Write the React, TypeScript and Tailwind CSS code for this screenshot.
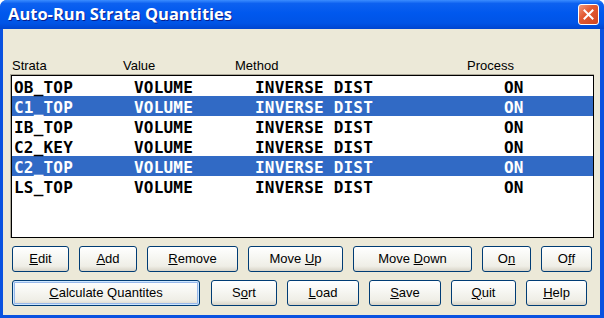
import type { ReactNode } from "react";

type Row = { strata: string; selected?: boolean };

const rows: Row[] = [
  { strata: "OB_TOP" },
  { strata: "C1_TOP", selected: true },
  { strata: "IB_TOP" },
  { strata: "C2_KEY" },
  { strata: "C2_TOP", selected: true },
  { strata: "LS_TOP" },
];

const uiFont = { fontFamily: '"Liberation Sans", Arial, sans-serif' };

function XpButton({ w, children, primary }: { w: string; children: ReactNode; primary?: boolean }) {
  return (
    <button
      type="button"
      className={[
        "flex h-[26px] items-center justify-center rounded-[3px] border border-[#003c74] bg-[linear-gradient(to_bottom,#ffffff_0%,#f7f7f3_40%,#efeee6_80%,#d8d4c8_100%)] text-[13px] text-black",
        primary ? "shadow-[inset_0_0_0_1px_#cee7ff,inset_0_0_0_2px_#98b8ea]" : "",
        w,
      ].join(" ")}
      style={uiFont}
    >
      {children}
    </button>
  );
}

export default function App() {
  return (
    <div className="flex h-[318px] w-[604px] flex-col overflow-hidden rounded-t-[7px] bg-[#0a52e0]">
      <div className="flex h-[29px] shrink-0 items-center justify-between bg-[linear-gradient(to_bottom,#3b8dff_0%,#0d61f0_12%,#0058ee_45%,#0054e6_80%,#0045cf_100%)] pl-[8px] pr-[5px]">
        <span
          className="text-[16.5px] font-bold text-white [text-shadow:1px_1px_0_#0a1e8c]"
          style={{ fontFamily: '"Open Sans", sans-serif' }}
        >
          Auto-Run Strata Quantities
        </span>
        <div className="flex h-[21px] w-[21px] items-center justify-center rounded-[3px] border border-white bg-[linear-gradient(135deg,#f09a7e_0%,#e35a32_40%,#cf4420_100%)]">
          <svg width="11" height="11" viewBox="0 0 11 11">
            <path d="M1.5 1.5 L9.5 9.5 M9.5 1.5 L1.5 9.5" stroke="white" strokeWidth="2" strokeLinecap="square" />
          </svg>
        </div>
      </div>

      <div className="mb-[3px] ml-[3px] mr-[4px] flex flex-1 flex-col bg-[#ece9d8]">
        <div
          className="ml-[9px] mt-[27px] grid h-[14px] grid-cols-[111px_112px_232px_1fr] items-center text-[13px] text-black"
          style={uiFont}
        >
          <span>Strata</span>
          <span>Value</span>
          <span>Method</span>
          <span>Process</span>
        </div>

        <div className="ml-[7px] mt-[4px] h-[164px] w-[584px] border-l border-t border-[#aca899] border-r-white border-b-white">
          <div className="h-full border border-black bg-white">
            {rows.map((r) => (
              <div
                key={r.strata}
                className={[
                  "grid h-[20px] grid-cols-[120px_121px_249px_1fr] items-center pl-[2px] text-[16px] font-bold tracking-[0.2px]",
                  r.selected ? "bg-[#316ac5] text-white" : "text-black",
                ].join(" ")}
                style={{ fontFamily: '"DejaVu Sans Mono", monospace' }}
              >
                <span>{r.strata}</span>
                <span>VOLUME</span>
                <span>INVERSE DIST</span>
                <span>ON</span>
              </div>
            ))}
          </div>
        </div>

        <div className="ml-[9px] mt-[8px] flex gap-[10px]">
          <XpButton w="w-[57px]"><u>E</u>dit</XpButton>
          <XpButton w="w-[58px]"><u>A</u>dd</XpButton>
          <XpButton w="w-[91px]"><u>R</u>emove</XpButton>
          <XpButton w="w-[95px]">Move&nbsp;<u>U</u>p</XpButton>
          <XpButton w="w-[119px]">Move&nbsp;<u>D</u>own</XpButton>
          <XpButton w="w-[49px]">O<u>n</u></XpButton>
          <XpButton w="w-[51px]">O<u>f</u>f</XpButton>
        </div>

        <div className="ml-[9px] mt-[8px] flex gap-[10px]">
          <XpButton w="w-[188px] mr-[1px]" primary><u>C</u>alculate Quantites</XpButton>
          <XpButton w="w-[66px]">S<u>o</u>rt</XpButton>
          <XpButton w="w-[72px]"><u>L</u>oad</XpButton>
          <XpButton w="w-[72px]"><u>S</u>ave</XpButton>
          <XpButton w="w-[65px]"><u>Q</u>uit</XpButton>
          <XpButton w="w-[61px]"><u>H</u>elp</XpButton>
        </div>
      </div>
    </div>
  );
}
